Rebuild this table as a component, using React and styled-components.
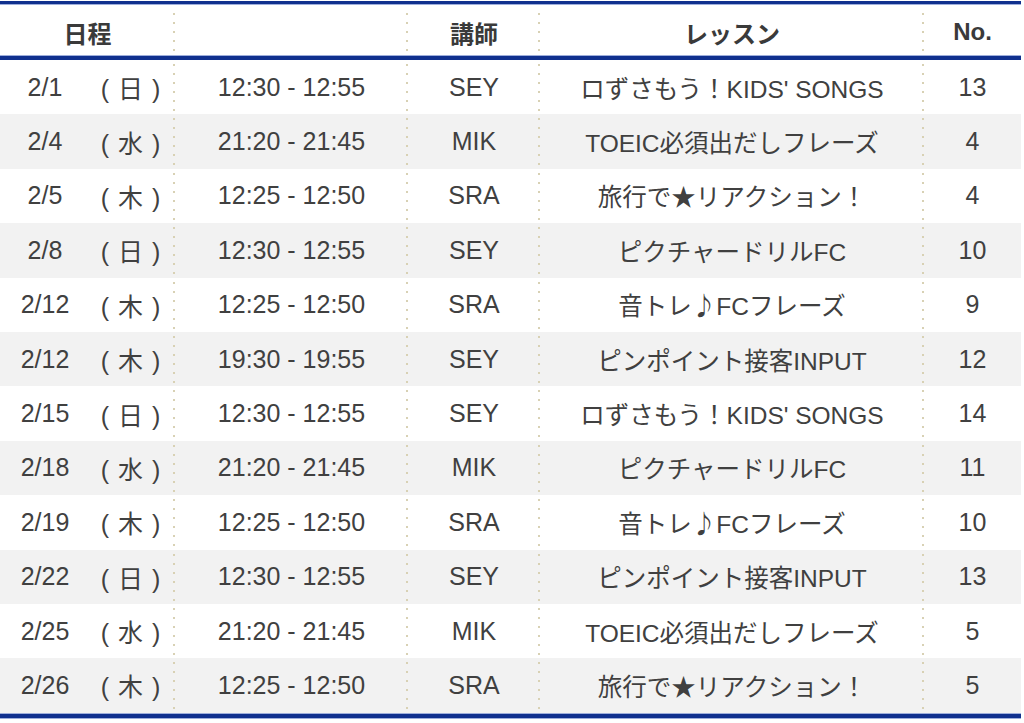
import styled, { createGlobalStyle } from "styled-components";

const lessons = [
  ["2/1", "日", "12:30 - 12:55", "SEY", "ロずさもう！KIDS' SONGS", 13],
  ["2/4", "水", "21:20 - 21:45", "MIK", "TOEIC必須出だしフレーズ", 4],
  ["2/5", "木", "12:25 - 12:50", "SRA", "旅行で★リアクション！", 4],
  ["2/8", "日", "12:30 - 12:55", "SEY", "ピクチャードリルFC", 10],
  ["2/12", "木", "12:25 - 12:50", "SRA", "音トレ♪FCフレーズ", 9],
  ["2/12", "木", "19:30 - 19:55", "SEY", "ピンポイント接客INPUT", 12],
  ["2/15", "日", "12:30 - 12:55", "SEY", "ロずさもう！KIDS' SONGS", 14],
  ["2/18", "水", "21:20 - 21:45", "MIK", "ピクチャードリルFC", 11],
  ["2/19", "木", "12:25 - 12:50", "SRA", "音トレ♪FCフレーズ", 10],
  ["2/22", "日", "12:30 - 12:55", "SEY", "ピンポイント接客INPUT", 13],
  ["2/25", "水", "21:20 - 21:45", "MIK", "TOEIC必須出だしフレーズ", 5],
  ["2/26", "木", "12:25 - 12:50", "SRA", "旅行で★リアクション！", 5],
];

// the note sign is full width in the original, so give it the CJK face
function LessonTitle({ text }) {
  const parts = text.split("♪");
  return (
    <Title $line>
      {parts.map((part, i) => (
        <span key={i}>
          {i > 0 && <Note>♪</Note>}
          {part}
        </span>
      ))}
    </Title>
  );
}

function App() {
  return (
    <>
      <GlobalStyle />
      <Table>
        <Rule />
        <Header>
          <Cell $line>日程</Cell>
          <Cell $line />
          <Cell $line>講師</Cell>
          <Cell $line>レッスン</Cell>
          <Cell>No.</Cell>
        </Header>
        <Rule $thick />
        {lessons.map(([date, day, time, teacher, title, no], i) => (
          <Row key={i} $shaded={i % 2 === 1}>
            <DateCell $line>
              <span>{date}</span>
              <Weekday>( {day} )</Weekday>
            </DateCell>
            <Cell $line>{time}</Cell>
            <Cell $line>{teacher}</Cell>
            <LessonTitle text={title} />
            <Cell>{no}</Cell>
          </Row>
        ))}
        <Rule $thick $bottom />
      </Table>
    </>
  );
}

export default App;

const GlobalStyle = createGlobalStyle`
  body {
    margin: 0;
    background: #ffffff;
    font-family: "Liberation Sans", "Noto Sans CJK JP", sans-serif;
    color: #404040;
  }
`;

const Table = styled.div`
  width: 1021px;
  padding-top: 1px;
`;

const Rule = styled.div`
  height: ${(p) => (p.$thick ? "4px" : "3px")};
  background: #10308e;
  border-top: ${(p) => (p.$thick ? "1px solid #9eaedb" : "none")};
  border-bottom: ${(p) => (!p.$thick || p.$bottom ? "1px solid #9eaedb" : "none")};
`;

const columns = "175px 233px 132px 384px 97px";

const Row = styled.div`
  display: grid;
  grid-template-columns: ${columns};
  height: 54.4px;
  background-color: ${(p) => (p.$shaded ? "#f2f2f2" : "#ffffff")};
  font-size: 25px;
`;

const Header = styled(Row)`
  height: 50px;
  padding-top: 4px;
  box-sizing: border-box;
  font-weight: bold;
  font-size: 24px;
  color: #3a3a3a;
`;

const Cell = styled.div`
  display: flex;
  align-items: center;
  justify-content: center;
  white-space: nowrap;
  background-image: ${(p) =>
    p.$line ? "linear-gradient(#d8d1b4 2px, transparent 2px)" : "none"};
  background-size: 2px 9px;
  background-repeat: repeat-y;
  background-position: right 4px;
`;

const Title = styled(Cell)`
  font-size: 24.5px;
`;

const Note = styled.span`
  font-family: "Noto Sans CJK JP", sans-serif;
`;

const DateCell = styled(Cell)`
  display: grid;
  grid-template-columns: 90px 1fr;
  justify-items: center;
`;

const Weekday = styled.span`
  padding-right: 4px;
  word-spacing: 2px;
`;
